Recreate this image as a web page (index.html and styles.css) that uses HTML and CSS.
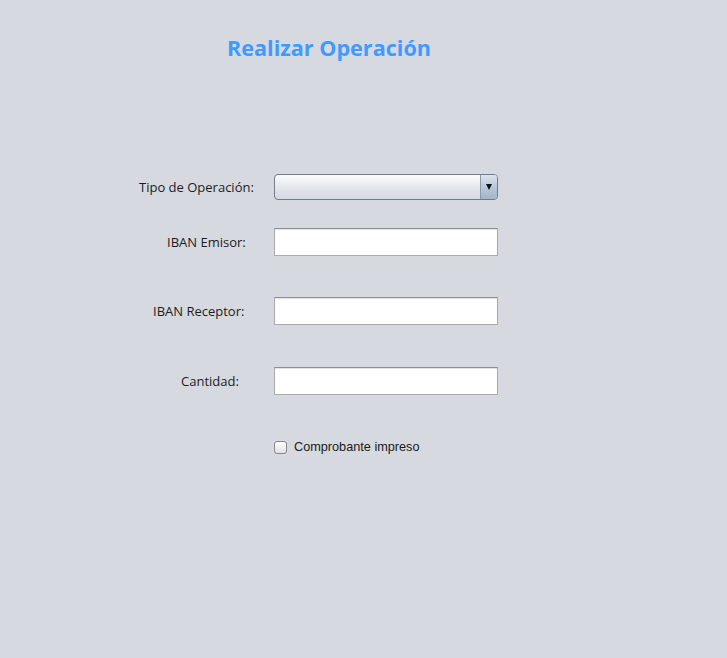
FILE: index.html
```html
<!DOCTYPE html>
<html lang="es">
<head>
<meta charset="utf-8">
<title>Realizar Operación</title>
<link rel="stylesheet" href="styles.css">
</head>
<body>
<main class="page">
  <h1 class="title">Realizar Operación</h1>
  <form class="form">
    <div class="row row-combo">
      <label class="label label-tipo">Tipo de Operación:</label>
      <div class="combo">
        <span class="combo-value"></span>
        <span class="combo-btn"><span class="arrow"></span></span>
      </div>
    </div>
    <div class="row row-emisor">
      <label class="label label-emisor">IBAN Emisor:</label>
      <input class="field" type="text">
    </div>
    <div class="row row-receptor">
      <label class="label label-receptor">IBAN Receptor:</label>
      <input class="field" type="text">
    </div>
    <div class="row row-cantidad">
      <label class="label label-cantidad">Cantidad:</label>
      <input class="field" type="text">
    </div>
    <div class="row row-check">
      <span class="check"></span>
      <span class="check-label">Comprobante impreso</span>
    </div>
  </form>
</main>
</body>
</html>
```
FILE: styles.css
```css
html, body {
  margin: 0;
  padding: 0;
  background: #d6d9e0;
  height: 100%;
}
.page {
  width: 727px;
  height: 658px;
  font-family: "Open Sans", "Noto Sans", sans-serif;
}
.title {
  margin: 0;
  padding-top: 33px;
  padding-left: 227px;
  font-size: 21.6px;
  font-weight: 700;
  line-height: 30px;
  color: #3f9bfd;
  letter-spacing: 0;
}
.form {
  display: flex;
  flex-direction: column;
  padding-top: 110px;
}
.row {
  display: flex;
  align-items: center;
  height: 28px;
}
.row-emisor { margin-top: 27px; }
.row-receptor { margin-top: 41px; }
.row-cantidad { margin-top: 42px; }
.row-check { margin-top: 44px; height: 16px; padding-left: 274px; }
.label {
  font-size: 13px;
  color: #1c1c1c;
  box-sizing: border-box;
  width: 274px;
  white-space: nowrap;
}
.label-tipo { padding-left: 139px; }
.label-emisor { padding-left: 167px; }
.label-receptor { padding-left: 153px; }
.label-cantidad { padding-left: 181px; }

.combo {
  box-sizing: border-box;
  width: 224px;
  height: 26px;
  border: 1px solid #6e7c8c;
  border-radius: 4px;
  background: linear-gradient(#fbfcfd, #e4e7ec 50%, #d4d9e0);
  display: flex;
  overflow: hidden;
}
.combo-value { flex: 1; }
.combo-btn {
  width: 16px;
  border-left: 1px solid #8a9aab;
  background: linear-gradient(#dbe4ee, #b9c8d8 50%, #a3b5c8);
  display: flex;
  align-items: center;
  justify-content: center;
}
.arrow {
  width: 0;
  height: 0;
  border-left: 3.5px solid transparent;
  border-right: 3.5px solid transparent;
  border-top: 6px solid #111;
}
.field {
  box-sizing: border-box;
  width: 224px;
  height: 28px;
  margin: 0;
  padding: 0 4px;
  border: 1px solid #a9abae;
  border-top-color: #8c8f93;
  background: #fff;
  box-shadow: inset 0 1px 1px rgba(0,0,0,0.12);
  outline: none;
}
.check {
  box-sizing: border-box;
  width: 13px;
  height: 13px;
  border: 1px solid #84878b;
  border-radius: 3px;
  background: linear-gradient(#ffffff, #dfe2e6);
}
.check-label {
  margin-left: 7px;
  font-family: "Liberation Sans", Arial, sans-serif;
  font-size: 12.7px;
  color: #1a1a1a;
}
```
